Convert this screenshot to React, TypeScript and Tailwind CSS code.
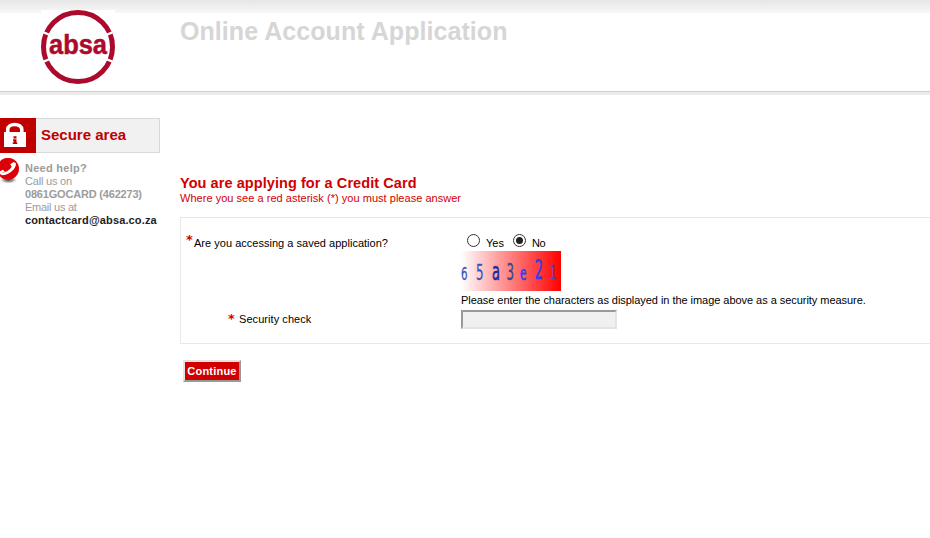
import React from "react";

function Logo() {
  return (
    <svg width="74" height="74" viewBox="0 0 74 74" className="block overflow-visible">
      <circle cx="37" cy="37" r="34.5" fill="none" stroke="#ac0a2c" strokeWidth="5" />
      <g stroke="#fff" strokeWidth="2.4">
        <path d="M0 21.3L9 25M74 21.3L65 25M0 52.7L9 49M74 52.7L65 49" />
      </g>
      <text
        x="8"
        y="44"
        textLength="58"
        lengthAdjust="spacingAndGlyphs"
        fontFamily='"Liberation Sans", sans-serif'
        fontWeight="700"
        fontSize="27"
        fill="#ac0a2c"
        stroke="#ac0a2c"
        strokeWidth="0.5"
      >
        absa
      </text>
    </svg>
  );
}

function LockTile() {
  return (
    <svg width="36" height="35" viewBox="0 0 36 35" className="block shrink-0">
      <rect width="36" height="35" fill="#c00000" />
      <path d="M7.7 15V11.8C7.7 4.8 21.8 4.8 21.8 11.8V15" fill="none" stroke="#fff" strokeWidth="3.6" />
      <rect x="4" y="14" width="22" height="15" fill="#fff" />
      <path d="M13.5 18.3h3v2.2h-3zM13 21.3h3.5v3.2h.8v1.5h-4.6v-1.5h.9v-1.8h-.6z" fill="#c00000" />
    </svg>
  );
}

function PhoneBadge() {
  return (
    <svg width="22" height="28" viewBox="0 0 22 28" className="block shrink-0">
      <defs>
        <radialGradient id="shade">
          <stop offset="0" stopColor="#444" />
          <stop offset="0.5" stopColor="#777" stopOpacity="0.7" />
          <stop offset="1" stopColor="#fff" stopOpacity="0" />
        </radialGradient>
      </defs>
      <ellipse cx="8.5" cy="21.8" rx="9.5" ry="4.2" fill="url(#shade)" />
      <circle cx="8" cy="10.8" r="11" fill="#dc0008" />
      <path
        d="M1.8 14.6C6 14.2 10.4 11.6 11.6 8.4L10.2 6.2L13.6 4L16 5.2C16.2 11.2 8.6 17.2 2 17.2L0 15.9V13.2L3 11.8L4.8 13.8"
        fill="#fff"
      />
    </svg>
  );
}

const glyphs = [
  { c: "6", x: 0, y: 28.5, w: 6.5, s: 18, f: "#2f55b4", k: 0.3 },
  { c: "5", x: 15, y: 28.5, w: 7.5, s: 22, f: "#2f55c4", k: 0.3 },
  { c: "a", x: 31, y: 28.5, w: 8, s: 25, f: "#2028a0", k: 0.6 },
  { c: "3", x: 45.5, y: 28.5, w: 7.5, s: 23, f: "#3c4884", k: 0.4 },
  { c: "e", x: 59, y: 28.5, w: 6.5, s: 20, f: "#3040f0", k: 0.7 },
  { c: "2", x: 73.5, y: 28, w: 8.5, s: 26, f: "#3040f0", k: 0.5 },
  { c: "1", x: 88.5, y: 28, w: 7, s: 19, f: "#3c50a8", k: 0.5 },
];

function Captcha() {
  return (
    <svg width="100" height="40" viewBox="0 0 100 40" className="block">
      <defs>
        <linearGradient id="fade">
          <stop offset="0" stopColor="#fff" />
          <stop offset="1" stopColor="#f00" />
        </linearGradient>
      </defs>
      <rect width="100" height="40" fill="url(#fade)" />
      {glyphs.map((g) => (
        <text
          key={g.x}
          x={g.x}
          y={g.y}
          textLength={g.w}
          lengthAdjust="spacingAndGlyphs"
          fontSize={g.s}
          fill={g.f}
          stroke={g.f}
          strokeWidth={g.k}
          fontFamily='"DejaVu Sans", sans-serif'
        >
          {g.c}
        </text>
      ))}
    </svg>
  );
}

function Radio({ on }: { on?: boolean }) {
  return (
    <span className="flex size-[13px] items-center justify-center rounded-full border border-[#333] bg-white">
      {on && <span className="size-[7px] rounded-full bg-[#222]" />}
    </span>
  );
}

export default function App() {
  return (
    <div className="flex h-[538px] w-[930px] flex-col overflow-hidden bg-white font-['Liberation_Sans',Arial,sans-serif] text-[11px] leading-[13px] text-black">
      <header className="flex h-[95px] shrink-0 flex-col">
        <div className="h-[13px] shrink-0 bg-linear-to-b from-[#e6e6e6] to-[#f8f8f8]" />
        <div className="-mt-[13px] flex h-[91px] shrink-0">
          <div className="flex w-[180px] pt-2.5 pl-[41px]">
            <div className="h-[74px] w-[74px] bg-white">
              <Logo />
            </div>
          </div>
          <h1 className="pt-4 text-[25px] leading-[30px] font-bold tracking-[0.06px] whitespace-nowrap text-[#d6d6d6]">
            Online Account Application
          </h1>
        </div>
        <div className="h-px bg-[#d0d0d0]" />
        <div className="h-[3px] bg-[#ebebeb]" />
      </header>

      <div className="flex">
        <aside className="w-[180px] shrink-0 pt-[23px]">
          <div className="flex h-[35px] w-40 items-center border-y border-r border-[#d9d9d9] bg-[#f1f1f1]">
            <LockTile />
            <span className="pb-[2px] pl-[5px] text-[15px] leading-[18px] font-bold whitespace-nowrap text-[#c00000]">
              Secure area
            </span>
          </div>
          <div className="flex pt-[5px]">
            <PhoneBadge />
            <div className="pt-[4px] pl-[3px] whitespace-nowrap text-[#9c9c9c]">
              <p className="font-bold tracking-[0.27px]">Need help?</p>
              <p className="tracking-[-0.2px]">Call us on</p>
              <p className="font-bold tracking-[-0.19px]">0861GOCARD (462273)</p>
              <p className="tracking-[-0.25px]">Email us at</p>
              <p className="font-bold tracking-[0.14px] text-[#222]">contactcard@absa.co.za</p>
            </div>
          </div>
        </aside>

        <main className="flex grow flex-col pt-[80px]">
          <h2 className="text-[14.5px] leading-[17px] font-bold tracking-[0.07px] text-[#d00000]">
            You are applying for a Credit Card
          </h2>
          <p className="tracking-[0.03px] text-[#d00000]">Where you see a red asterisk (*) you must please answer</p>

          <section className="mt-[12px] flex h-[127px] flex-col border-y border-l border-[#e8e8e8]">
            <div className="flex h-[33px] pt-4">
              <div className="flex w-[280px] pl-[5px]">
                <span className="w-2 font-['DejaVu_Sans',sans-serif] text-[13px] leading-[12px] font-bold text-[#d00000]">*</span>
                <span className="pt-[3px] tracking-[0.02px]">Are you accessing a saved application?</span>
              </div>
              <div className="flex pl-[6px]">
                <Radio />
                <span className="w-[33px] pt-[3px] pl-[6px]">Yes</span>
                <Radio on />
                <span className="pt-[3px] pl-[6px] tracking-[-0.4px]">No</span>
              </div>
            </div>
            <div className="pl-[280px]">
              <Captcha />
              <p className="pt-[3px] tracking-[-0.045px] whitespace-nowrap">
                Please enter the characters as displayed in the image above as a security measure.
              </p>
            </div>
            <div className="flex pt-[3px]">
              <div className="flex w-[280px] pl-[47px]">
                <span className="w-[11px] font-['DejaVu_Sans',sans-serif] text-[13px] leading-[18px] font-bold text-[#d00000]">*</span>
                <span className="pt-[3px] tracking-[0.06px]">Security check</span>
              </div>
              <input
                aria-label="Security check"
                className="h-[19px] w-[156px] border-2 border-t-[#999] border-r-[#e3e3e3] border-b-[#e3e3e3] border-l-[#999] bg-[#f0f0f0] outline-none"
              />
            </div>
          </section>

          <button className="mt-4 ml-[3px] flex h-[22px] w-[58px] items-center justify-center border-2 border-t-[#e3e3e3] border-r-[#999] border-b-[#999] border-l-[#e3e3e3] bg-[#d00000] font-bold tracking-[0.2px] text-white">
            Continue
          </button>
        </main>
      </div>
    </div>
  );
}
